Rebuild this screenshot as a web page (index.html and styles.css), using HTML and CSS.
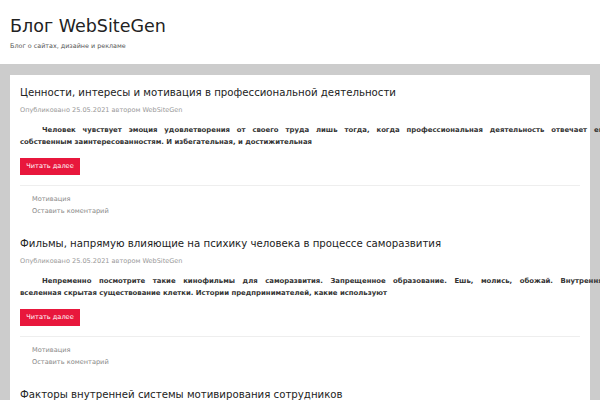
FILE: index.html
```html
<!DOCTYPE html>
<html lang="ru">
<head>
<meta charset="utf-8">
<link rel="stylesheet" href="styles.css">
</head>
<body>
<header class="site-header">
  <div class="site-title">Блог WebSiteGen</div>
  <div class="site-desc">Блог о сайтах, дизайне и рекламе</div>
</header>
<main class="content">
  <article class="post">
    <h2 class="post-title">Ценности, интересы и мотивация в профессиональной деятельности</h2>
    <div class="post-meta">Опубликовано 25.05.2021 автором WebSiteGen</div>
    <p class="post-excerpt"><span class="line-full">Человек чувствует эмоция удовлетворения от своего труда лишь тогда, когда профессиональная деятельность отвечает его</span> <span class="line-last">собственным заинтересованностям. И избегательная, и достижительная</span></p>
    <a class="more" href="#">Читать далее</a>
    <footer class="post-foot">
      <div>Мотивация</div>
      <div>Оставить коментарий</div>
    </footer>
  </article>
  <article class="post">
    <h2 class="post-title">Фильмы, напрямую влияющие на психику человека в процессе саморазвития</h2>
    <div class="post-meta">Опубликовано 25.05.2021 автором WebSiteGen</div>
    <p class="post-excerpt"><span class="line-full">Непременно посмотрите такие кинофильмы для саморазвития. Запрещенное образование. Ешь, молись, обожай. Внутренняя</span> <span class="line-last">вселенная скрытая существование клетки. Истории предпринимателей, какие используют</span></p>
    <a class="more" href="#">Читать далее</a>
    <footer class="post-foot">
      <div>Мотивация</div>
      <div>Оставить коментарий</div>
    </footer>
  </article>
  <article class="post">
    <h2 class="post-title">Факторы внутренней системы мотивирования сотрудников</h2>
  </article>
</main>
</body>
</html>
```
FILE: styles.css
```css
html, body {
  margin: 0;
  padding: 0;
  background: #fff;
  overflow: hidden;
}
body {
  font-family: "DejaVu Sans", sans-serif;
  font-size: 7px;
  color: #222;
  width: 600px;
  height: 400px;
}
.site-header {
  background: #fff;
  height: 64px;
  padding: 14px 0 0 10px;
  box-sizing: border-box;
}
.site-title {
  font-size: 17.5px;
  line-height: 24px;
  color: #222;
}
.site-desc {
  font-size: 6.4px;
  line-height: 10px;
  margin-top: 3px;
  color: #555;
}
.content {
  background: #fff;
  border-top: 11px solid #cccccc;
  border-left: 10px solid #cccccc;
  border-right: 10px solid #cccccc;
  padding: 0 10px;
  min-height: 400px;
}
.post {
  padding-top: 10px;
  padding-bottom: 9px;
}
.post-title {
  font-weight: normal;
  font-size: 10.2px;
  line-height: 16px;
  margin: 0;
  color: #222;
}
.post-meta {
  font-size: 6.55px;
  line-height: 10px;
  color: #999;
  margin-top: 4px;
}
.post-excerpt {
  width: 587px;
  margin: 9px 0 0 0;
  font-family: "DejaVu Sans", sans-serif;
  font-weight: bold;
  font-size: 6.9px;
  line-height: 12px;
  color: #333;
}
.line-full {
  display: block;
  text-align: justify;
  text-align-last: justify;
  text-indent: 22px;
  white-space: nowrap;
}
.line-last {
  display: block;
  white-space: nowrap;
}
.more {
  display: block;
  margin-top: 10px;
  background: #e8173c;
  color: #fff;
  text-decoration: none;
  font-size: 6.6px;
  line-height: 17px;
  height: 17px;
  width: 60px;
  text-align: center;
  white-space: nowrap;
}
.post-foot {
  margin-top: 10px;
  border-top: 1px solid #eeeeee;
  padding: 7px 0 0 12px;
  font-size: 6.6px;
  line-height: 12px;
  color: #888;
  width: 548px;
}
```
